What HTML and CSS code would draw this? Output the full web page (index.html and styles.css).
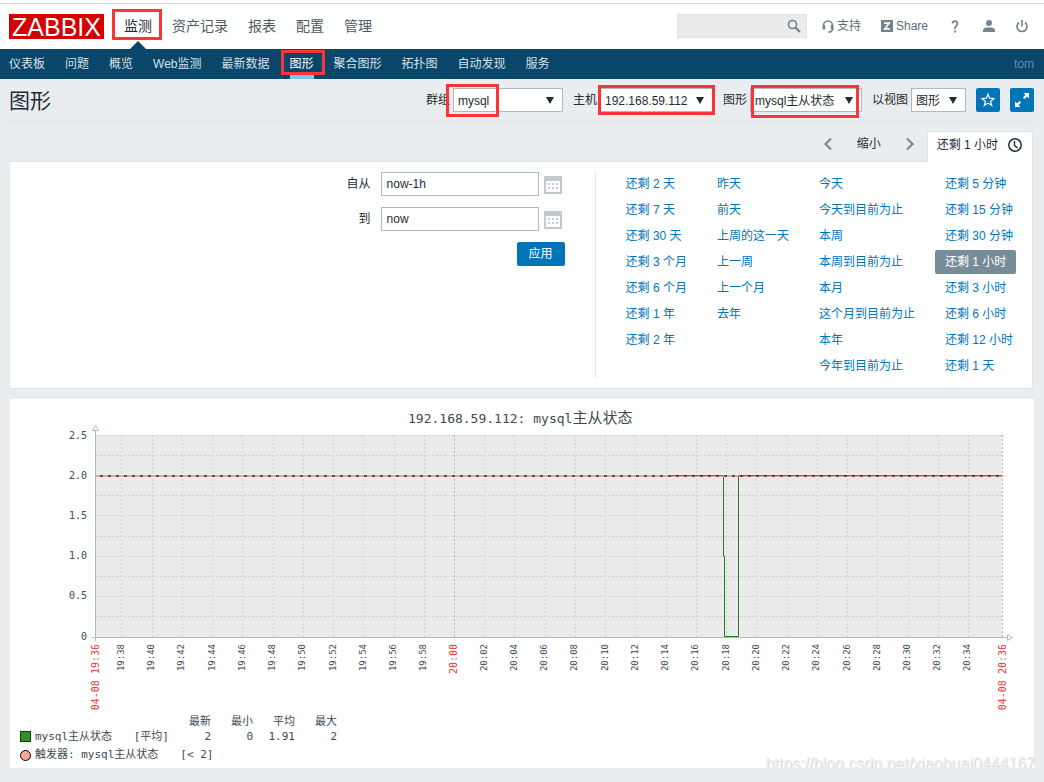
FILE: index.html
```html
<!DOCTYPE html>
<html lang="zh-CN">
<head>
<meta charset="utf-8">
<title>图形</title>
<link rel="stylesheet" href="styles.css">
</head>
<body>
<header class="top">
  <a class="logo" href="#">ZABBIX</a>
  <nav class="main-menu">
    <a class="selected marked mark-main" href="#">监测</a>
    <a href="#">资产记录</a>
    <a href="#">报表</a>
    <a href="#">配置</a>
    <a href="#">管理</a>
  </nav>
  <div class="tools">
    <form class="search">
      <input type="text" aria-label="搜索">
      <button type="button" aria-label="搜索"><svg width="14" height="14" viewBox="0 0 14 14"><circle cx="5.5" cy="5.5" r="4" fill="none" stroke="#71838d" stroke-width="1.6"/><path d="M8.5 8.5L13 13" stroke="#71838d" stroke-width="2.2"/></svg></button>
    </form>
    <a class="tool support" href="#"><svg width="12" height="13" viewBox="0 0 12 13"><path d="M1.500 8V5.500a4.500 4.500 0 0 1 9 0V10L8.500 12H6" fill="none" stroke="#71838d" stroke-width="1.600"/><path d="M0.700 5h2.500v4.500H0.700zM8.800 5h2.500v4.500H8.800z" fill="#71838d"/></svg>支持</a>
    <a class="tool share" href="#"><svg width="12" height="12" viewBox="0 0 12 12"><path d="M0 0h12v12H0z" fill="#71838d"/><path d="M3 3.200h5.200L3.800 8.800H9" fill="none" stroke="#fff" stroke-width="1.700"/></svg>Share</a>
    <a class="tool help" href="#" aria-label="帮助"><svg width="8" height="13" viewBox="0 0 8 13"><path d="M1.500 3.500C1.500 0.300 6.500 0.300 6.500 3.500C6.500 5.500 4 5.500 4 9" fill="none" stroke="#71838d" stroke-width="1.700"/><path d="M3 10.500h2v2H3z" fill="#71838d"/></svg></a>
    <a class="tool" href="#" aria-label="用户"><svg width="12" height="12" viewBox="0 0 12 12"><circle cx="6" cy="3" r="3" fill="#71838d"/><path d="M0 12V10.500C0 8 3 7.500 6 7.500S12 8 12 10.500V12z" fill="#71838d"/></svg></a>
    <a class="tool" href="#" aria-label="退出"><svg width="14" height="13" viewBox="0 0 14 13"><path d="M4 2.500A5 5 0 1 0 10 2.500M7 0V6.500" fill="none" stroke="#71838d" stroke-width="1.600"/></svg></a>
  </div>
</header>

<nav class="sub-menu">
  <a href="#">仪表板</a>
  <a href="#">问题</a>
  <a href="#">概览</a>
  <a href="#">Web监测</a>
  <a href="#">最新数据</a>
  <a class="selected marked mark-sub" href="#">图形</a>
  <a href="#">聚合图形</a>
  <a href="#">拓扑图</a>
  <a href="#">自动发现</a>
  <a href="#">服务</a>
  <span class="user">tom</span>
</nav>

<main>
  <div class="page-head">
    <h1>图形</h1>
    <form class="filters">
      <div class="field"><label for="group">群组</label><span class="select marked mark-group"><select id="group"><option>mysql</option></select></span></div>
      <div class="field"><label for="host">主机</label><span class="select marked mark-host"><select id="host"><option>192.168.59.112</option></select></span></div>
      <div class="field"><label for="graph">图形</label><span class="select marked mark-graph"><select id="graph"><option>mysql主从状态</option></select></span></div>
      <div class="field"><label for="view">以视图</label><span class="select view"><select id="view"><option>图形</option></select></span></div>
      <button class="icon-button" type="button" aria-label="收藏"><svg width="14" height="14" viewBox="0 0 14 14"><path d="M7 1.200L8.600 5.200L13 5.500L9.600 8.200L10.700 12.500L7 10.100L3.300 12.500L4.400 8.200L1 5.500L5.400 5.200z" fill="none" stroke="#fff" stroke-width="1.200"/></svg></button>
      <button class="icon-button" type="button" aria-label="全屏"><svg width="14" height="14" viewBox="0 0 14 14"><path d="M8.500 0H14V5.500L12 3.500L9.500 6L8 4.500L10.500 2zM0 8.500L2 10.500L4.500 8L6 9.500L3.500 12L5.500 14H0z" fill="#fff"/></svg></button>
    </form>
  </div>

  <div class="time-tabs">
    <button class="arrow" type="button" aria-label="后退"><svg width="10" height="14" viewBox="0 0 10 14"><path d="M8 1.500L2.500 7L8 12.500" fill="none" stroke="#768d99" stroke-width="2.200"/></svg></button>
    <button class="zoom-out" type="button">缩小</button>
    <button class="arrow" type="button" aria-label="前进"><svg width="10" height="14" viewBox="0 0 10 14"><path d="M2 1.500L7.500 7L2 12.500" fill="none" stroke="#768d99" stroke-width="2.200"/></svg></button>
    <a class="time-tab" href="#">还剩 1 小时<svg width="14" height="14" viewBox="0 0 14 14"><circle cx="7" cy="7" r="6.200" fill="none" stroke="#1f2c33" stroke-width="1.500"/><path d="M6.500 3V7.500L9.500 10" fill="none" stroke="#1f2c33" stroke-width="1.400"/></svg></a>
  </div>

  <section class="time-panel">
    <form class="range">
      <label for="from">自从</label><input id="from" type="text" value="now-1h">
      <button class="calendar" type="button" aria-label="日历"><svg width="18" height="18" viewBox="0 0 18 18"><path d="M1 3h16v14H1z" fill="#fff" stroke="#c0cbd0" stroke-width="2"/><path d="M0 1q0-1 1-1h16q1 0 1 1v4H0z" fill="#c0cbd0"/><path d="M4 8h2M8 8h2M12 8h2M4 12h2M8 12h2M12 12h2" stroke="#c0cbd0" stroke-width="2"/></svg></button>
      <label for="to">到</label><input id="to" type="text" value="now">
      <button class="calendar" type="button" aria-label="日历"><svg width="18" height="18" viewBox="0 0 18 18"><path d="M1 3h16v14H1z" fill="#fff" stroke="#c0cbd0" stroke-width="2"/><path d="M0 1q0-1 1-1h16q1 0 1 1v4H0z" fill="#c0cbd0"/><path d="M4 8h2M8 8h2M12 8h2M4 12h2M8 12h2M12 12h2" stroke="#c0cbd0" stroke-width="2"/></svg></button>
      <button class="apply" type="button">应用</button>
    </form>
    <div class="presets">
      <div class="preset-column"><a href="#">还剩 2 天</a><a href="#">还剩 7 天</a><a href="#">还剩 30 天</a><a href="#">还剩 3 个月</a><a href="#">还剩 6 个月</a><a href="#">还剩 1 年</a><a href="#">还剩 2 年</a></div>
      <div class="preset-column"><a href="#">昨天</a><a href="#">前天</a><a href="#">上周的这一天</a><a href="#">上一周</a><a href="#">上一个月</a><a href="#">去年</a></div>
      <div class="preset-column"><a href="#">今天</a><a href="#">今天到目前为止</a><a href="#">本周</a><a href="#">本周到目前为止</a><a href="#">本月</a><a href="#">这个月到目前为止</a><a href="#">本年</a><a href="#">今年到目前为止</a></div>
      <div class="preset-column"><a href="#">还剩 5 分钟</a><a href="#">还剩 15 分钟</a><a href="#">还剩 30 分钟</a><a class="selected" href="#">还剩 1 小时</a><a href="#">还剩 3 小时</a><a href="#">还剩 6 小时</a><a href="#">还剩 12 小时</a><a href="#">还剩 1 天</a></div>
    </div>
  </section>

  <section class="chart-card">
    <svg class="chart" viewBox="0 0 1024 314">
      <text class="chart-title" x="398" y="24">192.168.59.112: mysql<tspan class="chart-title-cjk">主从状态</tspan></text>
      <path class="plot" d="M86 36H992V238H86z"/>
      <path class="grid" d="M86 36.500H992M86 56.500H992M86 96.500H992M86 116.500H992M86 137.500H992M86 157.500H992M86 177.500H992M86 197.500H992M86 217.500H992"/>
      <path class="grid" d="M111.500 36V238M142.500 36V238M172.500 36V238M202.500 36V238M232.500 36V238M263.500 36V238M293.500 36V238M323.500 36V238M353.500 36V238M384.500 36V238M414.500 36V238M474.500 36V238M504.500 36V238M535.500 36V238M565.500 36V238M595.500 36V238M625.500 36V238M656.500 36V238M686.500 36V238M716.500 36V238M746.500 36V238M777.500 36V238M807.500 36V238M837.500 36V238M867.500 36V238M898.500 36V238M928.500 36V238M958.500 36V238"/>
      <path class="grid-main" d="M444.500 36V238M992.500 36V238"/>
      <path class="axis" d="M85.500 31V242M82 238.500H997M82.500 31.500H88.500L85.500 26.500zM997.500 235.500V241.500L1002.500 238.500z"/>
      <path class="trigger" d="M86 77H993"/>
      <path class="trigger-dash" d="M90 77H992"/>
      <path class="series-top" d="M661 76.500H713M729 76.500H992"/>
      <path class="series" d="M713.500 78V157.500H714.500V237.500H728.500V77"/>
      <g class="y-labels">
        <text x="77" y="40">2.5</text><text x="77" y="80">2.0</text><text x="77" y="120">1.5</text><text x="77" y="160">1.0</text><text x="77" y="200">0.5</text><text x="77" y="241">0</text>
      </g>
      <g class="x-labels">
        <text transform="translate(114 245) rotate(-90)">19:38</text>
        <text transform="translate(144 245) rotate(-90)">19:40</text>
        <text transform="translate(174 245) rotate(-90)">19:42</text>
        <text transform="translate(205 245) rotate(-90)">19:44</text>
        <text transform="translate(235 245) rotate(-90)">19:46</text>
        <text transform="translate(265 245) rotate(-90)">19:48</text>
        <text transform="translate(295 245) rotate(-90)">19:50</text>
        <text transform="translate(326 245) rotate(-90)">19:52</text>
        <text transform="translate(356 245) rotate(-90)">19:54</text>
        <text transform="translate(386 245) rotate(-90)">19:56</text>
        <text transform="translate(416 245) rotate(-90)">19:58</text>
        <text transform="translate(477 245) rotate(-90)">20:02</text>
        <text transform="translate(507 245) rotate(-90)">20:04</text>
        <text transform="translate(537 245) rotate(-90)">20:06</text>
        <text transform="translate(567 245) rotate(-90)">20:08</text>
        <text transform="translate(598 245) rotate(-90)">20:10</text>
        <text transform="translate(628 245) rotate(-90)">20:12</text>
        <text transform="translate(658 245) rotate(-90)">20:14</text>
        <text transform="translate(688 245) rotate(-90)">20:16</text>
        <text transform="translate(719 245) rotate(-90)">20:18</text>
        <text transform="translate(749 245) rotate(-90)">20:20</text>
        <text transform="translate(779 245) rotate(-90)">20:22</text>
        <text transform="translate(809 245) rotate(-90)">20:24</text>
        <text transform="translate(840 245) rotate(-90)">20:26</text>
        <text transform="translate(870 245) rotate(-90)">20:28</text>
        <text transform="translate(900 245) rotate(-90)">20:30</text>
        <text transform="translate(930 245) rotate(-90)">20:32</text>
        <text transform="translate(960 245) rotate(-90)">20:34</text>
        <text class="major" transform="translate(89 245) rotate(-90)">04-08 19:36</text>
        <text class="major" transform="translate(447 245) rotate(-90)">20:00</text>
        <text class="major" transform="translate(996 245) rotate(-90)">04-08 20:36</text>
      </g>
    </svg>
    <table class="legend">
      <thead><tr><th></th><th></th><th>最新</th><th>最小</th><th>平均</th><th>最大</th></tr></thead>
      <tbody><tr><td><span class="item"><span class="swatch"></span>mysql主从状态</span></td><td>[平均]</td><td>2</td><td>0</td><td>1.91</td><td>2</td></tr></tbody>
    </table>
    <div class="trigger-legend"><span class="item"><span class="swatch round"></span>触发器: mysql主从状态</span><span>[&lt; 2]</span></div>
  </section>
</main>
<div class="watermark">https://blog.csdn.net/xiaohuai0444167</div>
</body>
</html>
```
FILE: styles.css
```css
* { box-sizing: border-box; }
body {
  position: relative;
  margin: 0;
  background: #e9edf0;
  color: #1f2c33;
  font: 12px/24px "Liberation Sans", "Noto Sans CJK SC", sans-serif;
}
a { color: inherit; text-decoration: none; }
svg { flex: none; }
button, input, select { margin: 0; padding: 0; border: 0; background: none; color: inherit; font: inherit; }

/* annotation frames */
.marked { position: relative; }
.marked::before { content: ""; position: absolute; z-index: 2; border: 3px solid #fb3438; pointer-events: none; }
.mark-main::before { inset: 6px -10px 9px -12px; }
.mark-sub::before { inset: 1px -11px 4px -9px; }
.mark-group::before { inset: -4px 64px -4px -7px; }
.mark-host::before { inset: -3px -2px -2px -2px; }
.mark-graph::before { inset: -3px 3px -5px 1px; }

.top {
  display: flex;
  align-items: center;
  height: 49px;
  padding: 3px 15px 0 9px;
  background: #fff linear-gradient(#dcdcdc, #dcdcdc) 0 3px / 100% 1px no-repeat;
}
.logo { width: 95px; height: 25px; margin-right: 20px; background: #d40000; color: #fff; font-size: 25px; line-height: 26px; text-align: center; }
.main-menu { display: flex; gap: 20px; align-self: stretch; color: #4f5b62; font-size: 14px; line-height: 46px; }
.main-menu .selected { color: #1f2c33; }
.main-menu .selected::after {
  content: "";
  position: absolute;
  bottom: 0;
  left: 6px;
  border: 8px solid transparent;
  border-top: 0;
  border-bottom-color: #0a466a;
}
.tools { display: flex; align-items: center; margin-left: auto; color: #5d6d76; }
.search { display: flex; align-items: center; width: 130px; height: 24px; margin-right: 15px; padding-right: 5px; border: 1px solid #dfe4e7; background: #ebebeb; }
.search input { flex: 1; min-width: 0; height: 22px; }
.search button { display: flex; }
.tool { display: flex; align-items: center; gap: 3px; margin-left: 20px; }
.support { margin-left: 0; }
.help { margin: 0 4px 0 23px; }

.sub-menu { display: flex; gap: 20px; height: 30px; padding: 0 10px 0 9px; background: #0a466a; color: #d3e0e8; line-height: 30px; }
.sub-menu .selected { color: #fff; border-bottom: 4px solid #7fc3f1; }
.sub-menu .mark-sub::before { bottom: 0; }
.user { margin-left: auto; color: #6b8ba1; }

main { padding: 0 10px 0 9px; }
.page-head { display: flex; align-items: center; height: 43px; padding-top: 1px; border-bottom: 1px solid #dfe4e7; }
h1 { margin: 0; font-size: 21px; font-weight: 400; }
.filters { display: flex; gap: 10px; margin-left: auto; }
.field { display: flex; gap: 3px; }
.select { width: 112px; }
.select::after {
  content: "";
  position: absolute;
  top: 9px;
  right: 9px;
  border: 4px solid transparent;
  border-top: 7px solid #1f2c33;
  border-bottom: 0;
  pointer-events: none;
}
.select select { width: 100%; height: 24px; padding: 0 5px 0 4px; border: 1px solid #acbbc2; border-radius: 0; background: #fff; appearance: none; }
.mark-group { width: 110px; }
.mark-host { width: 113px; }
.view { position: relative; width: 55px; }
.icon-button { display: flex; align-items: center; justify-content: center; width: 24px; height: 24px; border-radius: 2px; background: #0275b8; }

.time-tabs { display: flex; align-items: center; justify-content: flex-end; height: 30px; margin: 9px 1px 0 0; }
.time-tabs button { display: flex; padding-bottom: 5px; }
.zoom-out { margin: 0 24px; }
.time-tab { position: relative; display: flex; align-items: center; gap: 10px; height: 31px; margin: 1px 0 0 12px; padding: 0 10px 5px 9px; border: 1px solid #dfe4e7; border-bottom: 0; background: #fff; }

.time-panel { display: flex; margin-right: 1px; border: 1px solid #dfe4e7; padding: 10px 9px; background: #fff; }
.range {
  flex: 1;
  display: grid;
  grid-template-columns: 1fr 158px 21px;
  grid-auto-rows: 24px;
  justify-content: end;
  gap: 11px 5px;
  padding-right: 30px;
  border-right: 1px solid #dfe4e7;
}
.range label { padding-right: 5px; text-align: right; }
.range input { width: 100%; padding: 0 5px; border: 1px solid #acbbc2; }
.calendar { display: flex; align-items: center; padding-top: 2px; }
.range .apply { grid-column: 2 / 4; justify-self: end; width: 48px; border-radius: 2px; background: #0275b8; color: #fff; }
.presets { display: flex; gap: 10px; margin-left: 20px; color: #0275b8; }
.preset-column { display: flex; flex-direction: column; align-items: flex-start; gap: 2px; }
.preset-column a { padding: 0 10px; border-radius: 2px; }
.preset-column .selected { background: #768d99; color: #fff; }

.chart-card { margin: 10px 0 0 1px; padding-bottom: 2px; background: #fff; color: #3c4a52; font: 11px/14px "DejaVu Sans Mono", "Noto Sans CJK SC", monospace; }
.chart { display: block; width: 100%; fill: #3c4a52; }
.chart-title { font-size: 13px; }
.chart-title-cjk { font-size: 15px; }
.plot { fill: #ebebeb; }
.grid { fill: none; stroke: #c9d3d8; stroke-dasharray: 2 2; }
.grid-main { fill: none; stroke: #a9b8c0; stroke-dasharray: 2 2; }
.axis { fill: none; stroke: #acbbc2; }
.trigger { stroke: #f0a18f; stroke-width: 2; }
.trigger-dash { stroke: #555; stroke-width: 2; stroke-dasharray: 3 5; }
.series-top { stroke: #1a4b10; stroke-opacity: 0.6; }
.series { fill: none; stroke: #1a8018; }
.y-labels { font-size: 10px; text-anchor: end; }
.x-labels { font-size: 9px; text-anchor: end; }
.major { fill: #e33734; font-size: 10px; }

.legend { margin: 1px 0 0 10px; border-collapse: collapse; }
.legend th, .legend td { height: 15px; padding: 0; font-weight: 400; line-height: 15px; text-align: right; }
.legend th { width: 42px; }
.legend th:first-child { width: 96px; }
.legend th:nth-child(2) { width: 53px; }
.item { display: flex; align-items: center; gap: 4px; }
.swatch { width: 11px; height: 11px; border: 1px solid #143c12; background: #339029; }
.round { border-color: #000; border-radius: 50%; background: #f4a797; }
.trigger-legend { display: flex; gap: 22px; margin-left: 10px; padding: 4px 0; }

.watermark {
  position: absolute;
  right: 9px;
  bottom: -8px;
  color: #eceff1;
  font-size: 16px;
  text-shadow: 1px 1px 1px #cfd3d5;
}
```
